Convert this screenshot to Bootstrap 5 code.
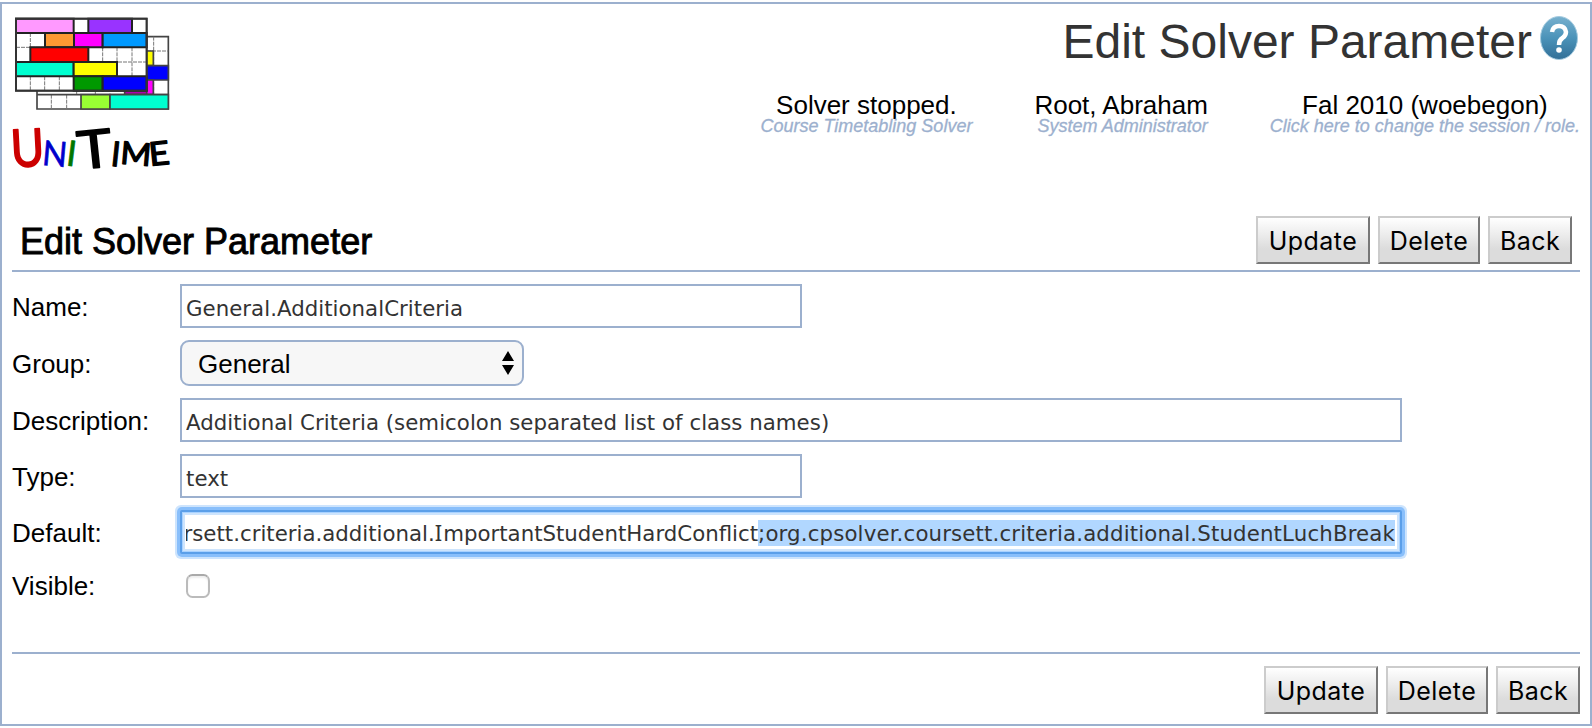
<!DOCTYPE html>
<html lang="en">
<head>
<meta charset="utf-8">
<title>Edit Solver Parameter</title>
<link href="https://cdn.jsdelivr.net/npm/bootstrap@5.3.0/dist/css/bootstrap.min.css" rel="stylesheet">
<style>
:root { --line: #9cb0ce; }
body { font: 26px/30px "Liberation Sans", Arial, sans-serif; color: #000; background: #fff; overflow: hidden; }
.frame { margin-top: 2px; height: 724px; border: 2px solid var(--line); padding: 0 10px; }
.top-area { height: 208px; }
.logo { width: 190px; height: 180px; margin: -4px 0 0 -12px; }
.page-name { font-size: 48px; line-height: 56px; color: #333; margin: 10px 0 0; font-weight: 400; }
.help { width: 38px; height: 44px; margin: 12px 2px 0 8px; }
.info { gap: 62px; margin-top: 23px; }
.info div { line-height: 24px; white-space: nowrap; }
.info small { display: block; font-size: 18px; line-height: 18px; font-style: italic; color: var(--line); -webkit-text-stroke: .3px var(--line); }
.bar-top { height: 60px; border-bottom: 2px solid var(--line); padding: 4px 8px 6px 8px; }
.bar-top h2 { font-size: 36px; line-height: 44px; margin: 4px 0 0; font-weight: 400; -webkit-text-stroke: .9px #000; }
.fields { gap: 12px; padding-top: 12px; height: 380px; }
.fields label { width: 168px; flex: none; padding-top: 1px; }
.form-control { height: 44px; width: 622px; border: 2px solid var(--line); border-radius: 0; padding: 5px 4px 0; color: #333; font: 21.3px/34px "DejaVu Sans", Verdana, sans-serif; letter-spacing: .03px; }
.form-control.wide { width: 1222px; }
.form-select { width: 344px; height: 46px; border: 2px solid var(--line); border-radius: 9px; background: #f7f7f7; color: #000; font-size: 26px; line-height: 30px; padding: 0 8px 0 16px; }
.form-select span { padding-top: 1px; }
.active-field { border-color: #5b9fe9; border-radius: 2px; padding: 4px 5px 0 4px; letter-spacing: 0; box-shadow: 0 0 0 3px #89bffb, 0 0 0 5px #cde4fd, inset 0 0 0 1px #a9d2ff, inset 0 0 0 3px #cde4fd; white-space: nowrap; }
.clip { overflow: hidden; width: 100%; display: flex; justify-content: flex-end; height: 34px; align-items: center; }
.clip span { height: 26px; line-height: 28px; }
.clip .picked { background: #b1d7ff; letter-spacing: .145px; }
.clip i { font: 21.8px/20px "Noto Sans", sans-serif; letter-spacing: 1px; }
.form-check-input { width: 24px; height: 24px; margin: 0 0 0 6px; border: 2px solid #bbb; border-top-color: #aaa; border-radius: 6px; box-shadow: inset 0 2px 2px #eee; }
.btn { height: 48px; border: 2px solid; border-color: #ccc #777 #777 #ccc; border-radius: 0; padding: 1px 0 0; font: 25px/40px Inter, sans-serif; letter-spacing: .45px; color: #000; background: linear-gradient(#fff, #dcdcdc 70%, #dcdcdc); }
.b-update { width: 114px; } .b-delete { width: 102px; } .b-back { width: 84px; }
.bar-bottom { border-top: 2px solid var(--line); padding-top: 12px; }
</style>
</head>
<body>
<main class="frame">
  <header class="top-area d-flex justify-content-between">
    <svg class="logo" viewBox="0 0 570 540">
      <g stroke="#444" stroke-width="5">
        <path fill="#fff" d="M111 110H505V327H111z"/>
        <path fill="none" stroke="#777" stroke-width="3" stroke-dasharray="12 3" d="M154 284V327M200 284V327M461 110V284M441 153H505M230 272V284M286 272V284"/>
        <path fill="#ff0" d="M430 153H460V197H430z"/>
        <path fill="#00f" d="M430 197H505V240H430z"/>
        <path fill="#f0f" d="M430 240H460V284H430z"/>
        <path fill="#b000b0" d="M374 265H440V284H374z"/>
        <path fill="none" d="M111 284H505"/>
        <path fill="#9f3" d="M243 284H330V327H243z"/>
        <path fill="#00ffd5" d="M330 284H505V327H330z" style="fill:#00ffd0"/>
        <path fill="#fff" d="M48 56H440V272H48z"/>
        <path fill="none" stroke="#777" stroke-width="3" stroke-dasharray="12 3" d="M91 99V142M48 142H134M308 142V186M351 142V229M396 142V229M264 186H440M91 229V272M134 229V272M178 229V272"/>
      </g>
      <g stroke="#222" stroke-width="6">
        <path fill="#f9f" d="M48 56H221V99H48z"/><path fill="#93f" d="M265 56H396V99H265z"/>
        <path fill="#f93" d="M135 99H222V142H135z"/><path fill="#f0f" d="M222 99H308V142H222z"/><path fill="#0099ff" d="M308 99H440V142H308z"/>
        <path fill="#f00" d="M91 142H265V186H91z"/>
        <path fill="#00ffd0" d="M48 186H221V229H48z"/><path fill="#ff0" d="M221 186H351V229H221z"/>
        <path fill="#090" d="M221 229H308V272H221z"/><path fill="#00f" d="M308 229H440V272H308z"/>
        <path fill="none" stroke="#333" stroke-width="6" d="M48 56H440V272H48z"/>
      </g>
      <g font-family="Lato, sans-serif" stroke-linejoin="round" stroke-width="5">
        <text x="32" y="499" font-size="156" fill="#c00" stroke="#c00" textLength="100" lengthAdjust="spacingAndGlyphs" transform="rotate(-3 82 440)">U</text>
        <text x="128" y="498" font-size="104" fill="#00c" stroke="#00c" stroke-width="2" textLength="74" lengthAdjust="spacingAndGlyphs" transform="rotate(5 165 460)">N</text>
        <text x="200" y="498" font-size="106" fill="#070" stroke="#070" stroke-width="2" transform="rotate(7 214 460)">I</text>
        <text x="232" y="503" font-size="158" stroke="#000" textLength="104" lengthAdjust="spacingAndGlyphs" transform="rotate(-6 285 450)">T</text>
        <text x="333" y="499" font-size="104" stroke="#000" stroke-width="3" transform="rotate(6 348 460)">I</text>
        <text x="362" y="495" font-size="94" stroke="#000" stroke-width="4" textLength="92" lengthAdjust="spacingAndGlyphs" transform="rotate(5 408 460)">M</text>
        <text x="446" y="495" font-size="98" stroke="#000" stroke-width="4" textLength="62" lengthAdjust="spacingAndGlyphs" transform="rotate(-6 478 460)">E</text>
      </g>
    </svg>
    <div class="d-flex flex-column align-items-end">
      <div class="d-flex">
        <h1 class="page-name">Edit Solver Parameter</h1>
        <svg class="help" viewBox="0 0 38 44">
          <defs><linearGradient id="hg" x2="0" y2="1"><stop stop-color="#77b0ce"/><stop offset=".5" stop-color="#4b93b9"/><stop offset="1" stop-color="#326f97"/></linearGradient></defs>
          <ellipse cx="19" cy="22" rx="18.500" ry="21.500" fill="url(#hg)" stroke="#a5cbdf"/>
          <path d="M12 16Q13 10 19 10T26 16Q26 19.500 22.500 22Q19 24 19 29" fill="none" stroke="#fff" stroke-width="4.500"/>
          <circle cx="19" cy="34" r="2.800" fill="#fff"/>
        </svg>
      </div>
      <div class="info d-flex text-center">
        <div>Solver stopped.<small>Course Timetabling Solver</small></div>
        <div class="text-end">Root, Abraham<small>System Administrator</small></div>
        <div>Fal 2010 (woebegon)<small>Click here to change the session / role.</small></div>
      </div>
    </div>
  </header>
  <section class="bar-top d-flex justify-content-between">
    <h2>Edit Solver Parameter</h2>
    <div class="d-flex gap-2">
      <button class="btn b-update">Update</button><button class="btn b-delete">Delete</button><button class="btn b-back">Back</button>
    </div>
  </section>
  <form class="fields d-flex flex-column">
    <div class="d-flex align-items-center"><label for="name">Name:</label><input id="name" class="form-control" value="General.AdditionalCriteria"></div>
    <div class="d-flex align-items-center"><label>Group:</label>
      <div class="form-select d-flex align-items-center justify-content-between"><span>General</span>
        <svg width="12" height="24" viewBox="0 0 12 24"><path d="M6 0L12 10H0zM6 24L0 14H12z"/></svg></div></div>
    <div class="d-flex align-items-center"><label for="desc">Description:</label><input id="desc" class="form-control wide" value="Additional Criteria (semicolon separated list of class names)"></div>
    <div class="d-flex align-items-center"><label for="type">Type:</label><input id="type" class="form-control" value="text"></div>
    <div class="d-flex align-items-center"><label>Default:</label>
      <div class="form-control wide active-field"><div class="clip"><span>rsett.criteria.additional.<i>I</i>mportantStudentHardConflict</span><span class="picked">;org.cpsolver.coursett.criteria.additional.StudentLuchBreak</span></div></div></div>
    <div class="d-flex align-items-center" style="height:40px"><label class="pt-0" for="vis">Visible:</label><input id="vis" type="checkbox" class="form-check-input"></div>
  </form>
  <footer class="bar-bottom d-flex gap-2 justify-content-end">
    <button class="btn b-update">Update</button><button class="btn b-delete">Delete</button><button class="btn b-back">Back</button>
  </footer>
</main>
<script src="https://cdn.jsdelivr.net/npm/bootstrap@5.3.0/dist/js/bootstrap.bundle.min.js"></script>
</body>
</html>
